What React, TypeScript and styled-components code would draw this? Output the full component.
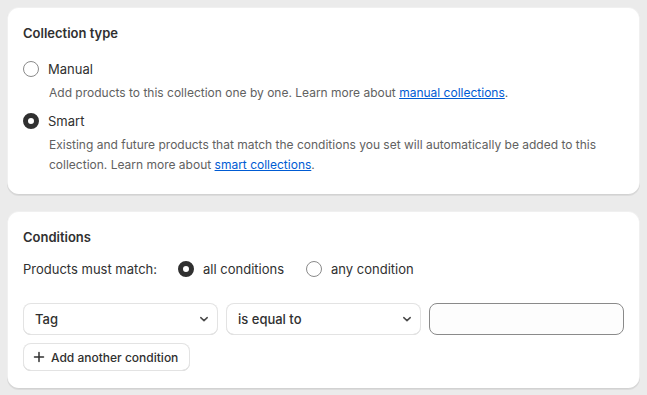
import React, {useState} from 'react';
import styled, {createGlobalStyle} from 'styled-components';

const GlobalStyle = createGlobalStyle`
  html, body {
    margin: 0;
    background: #ebebeb;
  }
  body {
    font-family: Inter, "Noto Sans", sans-serif;
    color: #303030;
    font-size: 13px;
    line-height: 20px;
    -webkit-font-smoothing: antialiased;
  }
`;

const Page = styled.div`
  padding: 7px;
  display: flex;
  flex-direction: column;
  gap: 16px;
`;

const Card = styled.section<{$top?: number; $bottom?: number}>`
  background: #fff;
  border-radius: 12px;
  padding: ${p => p.$top ?? 16}px 16px ${p => p.$bottom ?? 16}px;
  box-shadow: 0 1px 0 rgba(26, 26, 26, 0.07), inset 0 -1px 0 rgba(0, 0, 0, 0.12),
    inset 0 0 0 1px rgba(0, 0, 0, 0.06);
`;

const Title = styled.h2<{$gap: number}>`
  margin: 0 0 ${p => p.$gap}px;
  font-size: 13px;
  line-height: 20px;
  font-weight: 600;
`;

const ChoiceList = styled.div`
  display: flex;
  flex-direction: column;
  gap: 8px;
`;

const Choice = styled.label<{$offset?: number}>`
  display: flex;
  align-items: center;
  gap: 9px;
  margin-left: ${p => p.$offset ?? 0}px;
  cursor: pointer;
`;

const Dot = styled.span<{$on: boolean}>`
  box-sizing: border-box;
  width: 16px;
  height: 16px;
  border-radius: 50%;
  flex: none;
  background: #fff;
  border: ${p => (p.$on ? '5px solid #303030' : '1px solid #8a8a8a')};
`;

const Help = styled.p`
  margin: 4px 0 0 26px;
  font-size: 12px;
  line-height: 20px;
  color: #616161;
`;

const Link = styled.a`
  color: #005bd3;
  text-decoration: underline;
`;

const MatchRow = styled.div`
  display: flex;
  align-items: center;
  gap: 20px;
  margin-bottom: 24px;
`;

const Fields = styled.div`
  display: grid;
  grid-template-columns: repeat(3, minmax(0, 1fr));
  gap: 8px;
`;

const SelectBox = styled.div`
  box-sizing: border-box;
  height: 32px;
  display: flex;
  align-items: center;
  justify-content: space-between;
  padding: 0 6px 0 12px;
  border-radius: 8px;
  background: #fff;
  font-weight: 500;
  box-shadow: inset 0 0 0 1px #e3e3e3, inset 0 -1px 0 #d4d4d4;
`;

const TextInput = styled.input`
  box-sizing: border-box;
  width: 100%;
  height: 32px;
  border: 1px solid #8a8a8a;
  border-radius: 8px;
  background: #fdfdfd;
  outline: none;
  padding: 0 12px;
  font: inherit;
`;

const Button = styled.button`
  margin-top: 8px;
  height: 28px;
  display: inline-flex;
  align-items: center;
  gap: 6px;
  padding: 0 12px 0 10px;
  border: none;
  border-radius: 8px;
  background: #fff;
  font-family: inherit;
  font-size: 12px;
  font-weight: 550;
  color: #303030;
  box-shadow: inset 0 0 0 1px #e3e3e3, inset 0 -1px 0 #cccccc;
  cursor: pointer;
`;

const Chevron = () => (
  <svg width="16" height="16" viewBox="0 0 16 16" fill="none">
    <path d="M4.8 6.6 8 9.6l3.2-3" stroke="#4a4a4a" strokeWidth="1.5" strokeLinecap="round" strokeLinejoin="round"/>
  </svg>
);

const Plus = () => (
  <svg width="12" height="12" viewBox="0 0 12 12" fill="none">
    <path d="M6 1.5v9M1.5 6h9" stroke="#303030" strokeWidth="1.5" strokeLinecap="round"/>
  </svg>
);

export default function App() {
  const [type, setType] = useState('smart');
  const [match, setMatch] = useState('all');

  return (
    <>
      <GlobalStyle/>
      <Page>
        <Card $bottom={20}>
          <Title $gap={16}>Collection type</Title>
          <ChoiceList>
            <div>
              <Choice onClick={() => setType('manual')}>
                <Dot $on={type === 'manual'}/>Manual
              </Choice>
              <Help>
                Add products to this collection one by one. Learn more about{' '}
                <Link href="#">manual collections</Link>.
              </Help>
            </div>
            <div>
              <Choice onClick={() => setType('smart')}>
                <Dot $on={type === 'smart'}/>Smart
              </Choice>
              <Help>
                Existing and future products that match the conditions you set will automatically be added to this
                collection. Learn more about <Link href="#">smart collections</Link>.
              </Help>
            </div>
          </ChoiceList>
        </Card>

        <Card $bottom={18}>
          <Title $gap={12}>Conditions</Title>
          <MatchRow>
            <span>Products must match:</span>
            <Choice onClick={() => setMatch('all')} $offset={1}>
              <Dot $on={match === 'all'}/>all conditions
            </Choice>
            <Choice onClick={() => setMatch('any')} $offset={2}>
              <Dot $on={match === 'any'}/>any condition
            </Choice>
          </MatchRow>
          <Fields>
            <SelectBox>Tag<Chevron/></SelectBox>
            <SelectBox>is equal to<Chevron/></SelectBox>
            <TextInput/>
          </Fields>
          <Button><Plus/>Add another condition</Button>
        </Card>
      </Page>
    </>
  );
}
